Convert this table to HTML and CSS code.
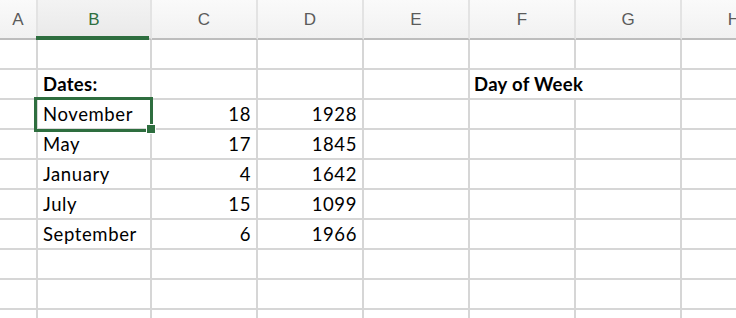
FILE: index.html
```html
<!DOCTYPE html>
<html>
<head>
<meta charset="utf-8">
<link rel="stylesheet" href="styles.css">
</head>
<body>
<div class="sheet">
  <div class="grid">
    <div class="hd">A</div><div class="hd hd-sel">B</div><div class="hd">C</div><div class="hd">D</div><div class="hd">E</div><div class="hd">F</div><div class="hd">G</div><div class="hd">H</div>

    <div class="rh"></div><div class="c"></div><div class="c"></div><div class="c"></div><div class="c"></div><div class="c"></div><div class="c"></div><div class="c"></div>
    <div class="rh"></div><div class="c b">Dates:</div><div class="c"></div><div class="c"></div><div class="c"></div><div class="c b span2">Day of Week</div><div class="c"></div>
    <div class="rh"></div><div class="c">November</div><div class="c n">18</div><div class="c n">1928</div><div class="c"></div><div class="c"></div><div class="c"></div><div class="c"></div>
    <div class="rh"></div><div class="c">May</div><div class="c n">17</div><div class="c n">1845</div><div class="c"></div><div class="c"></div><div class="c"></div><div class="c"></div>
    <div class="rh"></div><div class="c">January</div><div class="c n">4</div><div class="c n">1642</div><div class="c"></div><div class="c"></div><div class="c"></div><div class="c"></div>
    <div class="rh"></div><div class="c">July</div><div class="c n">15</div><div class="c n">1099</div><div class="c"></div><div class="c"></div><div class="c"></div><div class="c"></div>
    <div class="rh"></div><div class="c">September</div><div class="c n">6</div><div class="c n">1966</div><div class="c"></div><div class="c"></div><div class="c"></div><div class="c"></div>
    <div class="rh"></div><div class="c"></div><div class="c"></div><div class="c"></div><div class="c"></div><div class="c"></div><div class="c"></div><div class="c"></div>
    <div class="rh"></div><div class="c"></div><div class="c"></div><div class="c"></div><div class="c"></div><div class="c"></div><div class="c"></div><div class="c"></div>
    <div class="rh"></div><div class="c"></div><div class="c"></div><div class="c"></div><div class="c"></div><div class="c"></div><div class="c"></div><div class="c"></div>
  </div>
  <div class="selection"><span class="handle"></span></div>
</div>
</body>
</html>
```
FILE: styles.css
```css
html, body {
  margin: 0;
  padding: 0;
  background: #ffffff;
}

.sheet {
  position: relative;
  width: 736px;
  height: 318px;
  overflow: hidden;
}

.grid {
  display: grid;
  grid-template-columns: 38px 114px 106px 106px 106px 106px 106px 106px;
  grid-template-rows: 40px;
  grid-auto-rows: 30px;
  width: 790px;
}

.hd {
  box-sizing: border-box;
  display: flex;
  align-items: center;
  justify-content: center;
  padding-top: 1px;
  background: linear-gradient(#fafafa, #f1f1f1);
  border-right: 2px solid #e3e3e3;
  border-bottom: 2px solid #bdbdbd;
  font-family: "Liberation Sans", Arial, sans-serif;
  font-size: 17px;
  color: #5b5b5b;
}

.hd-sel {
  position: relative;
  background: linear-gradient(#f3f3f3, #e9e9e9);
  color: #2e6f3f;
}

.hd-sel::after {
  content: "";
  position: absolute;
  left: -2px;
  right: 1px;
  bottom: -2px;
  height: 4px;
  background: #2e6e3f;
}

.rh,
.c {
  box-sizing: border-box;
  border-right: 2px solid #d6d6d6;
  border-bottom: 2px solid #d6d6d6;
  background: #ffffff;
}

.c {
  display: flex;
  align-items: flex-end;
  padding: 0 5px 3px 5px;
  font-family: "Lato", "Open Sans", sans-serif;
  font-size: 18.5px;
  letter-spacing: 0.6px;
  line-height: 21px;
  color: #000000;
  white-space: nowrap;
}

.n {
  justify-content: flex-end;
  padding-right: 5px;
}

.b {
  font-weight: bold;
  letter-spacing: 0.3px;
}

.span2 {
  grid-column: span 2;
  padding-left: 4px;
}

.selection {
  position: absolute;
  left: 34px;
  top: 97px;
  width: 113px;
  height: 29px;
  border: 3px solid #2e6e3f;
}

.handle {
  position: absolute;
  right: -6px;
  bottom: -5px;
  width: 8px;
  height: 8px;
  background: #2e6e3f;
  border: 1px solid #ffffff;
}
```
